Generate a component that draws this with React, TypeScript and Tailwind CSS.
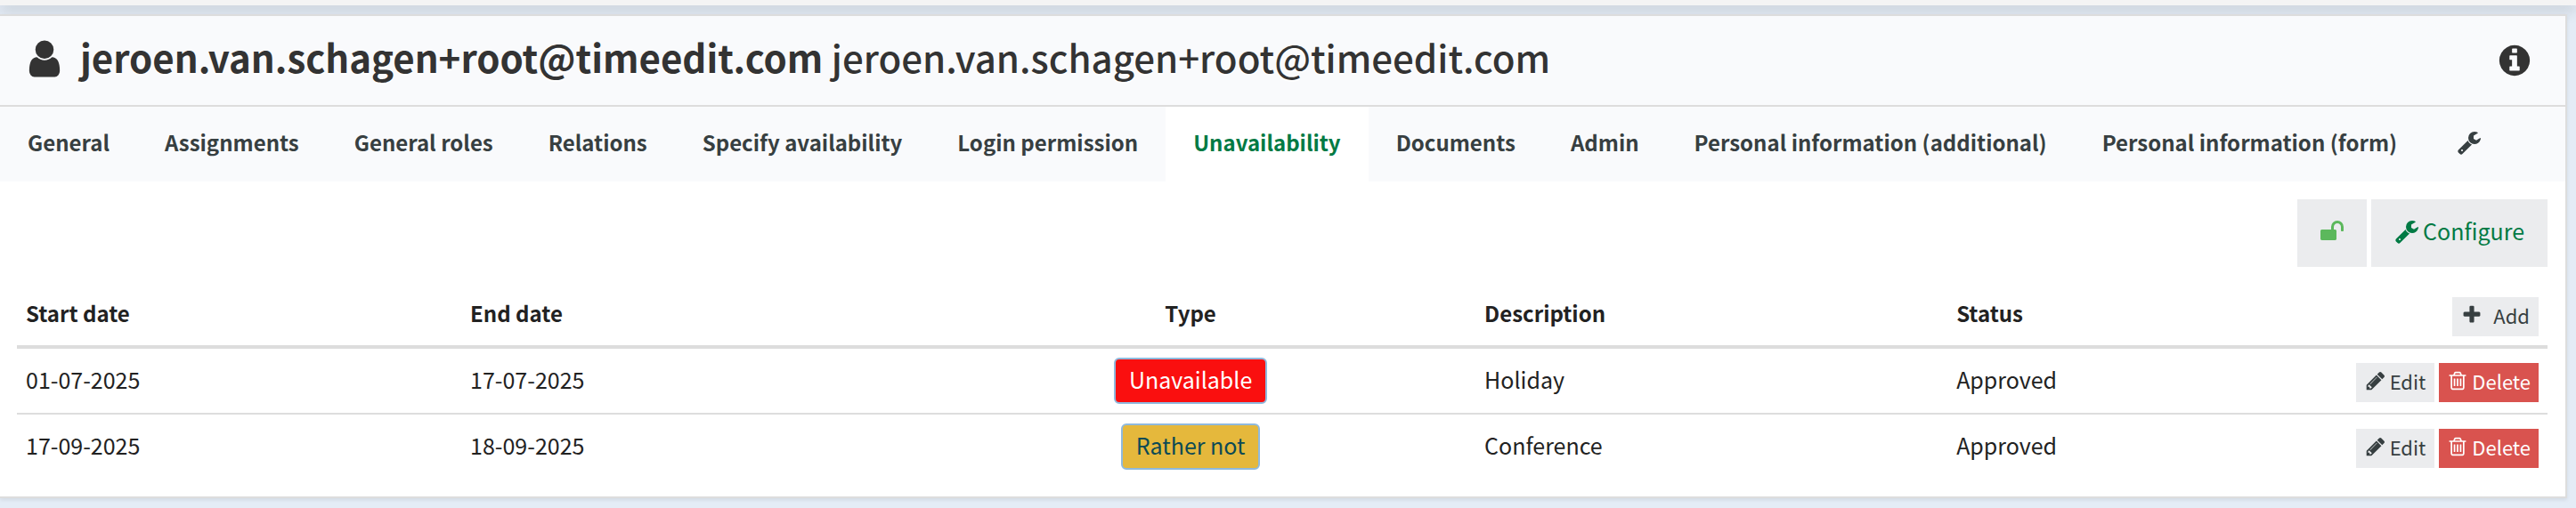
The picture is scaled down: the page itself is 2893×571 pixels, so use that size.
import type { ReactNode } from "react";

// Font Awesome 4 glyphs, all on the same 1792 grid
const icons = {
  user: "M1536 1399q0 109-62.5 187t-150.5 78h-854q-88 0-150.5-78t-62.5-187q0-85 8.5-160.5t31.5-152 58.5-131 94-89 134.5-34.5q131 128 313 128t313-128q76 0 134.5 34.5t94 89 58.5 131 31.5 152 8.5 160.5zM1280 512q0 159-112.5 271.5t-271.5 112.5-271.5-112.5-112.5-271.5 112.5-271.5 271.5-112.5 271.5 112.5 112.5 271.5z",
  info: "M1152 1376v-160q0-14-9-23t-23-9h-96v-512q0-14-9-23t-23-9h-320q-14 0-23 9t-9 23v160q0 14 9 23t23 9h96v320h-96q-14 0-23 9t-9 23v160q0 14 9 23t23 9h448q14 0 23-9t9-23zm-128-896v-160q0-14-9-23t-23-9h-192q-14 0-23 9t-9 23v160q0 14 9 23t23 9h192q14 0 23-9t9-23zm640 416q0 209-103 385.5t-279.5 279.5-385.5 103-385.5-103-279.5-279.5-103-385.5 103-385.5 279.5-279.5 385.5-103 385.5 103 279.5 279.5 103 385.5z",
  wrench: "M448 1472q0-26-19-45t-45-19-45 19-19 45 19 45 45 19 45-19 19-45zm644-420l-682 682q-37 37-90 37-52 0-91-37l-106-108q-38-36-38-90 0-53 38-91l681-681q39 98 114.5 173.5t173.5 114.5zm634-435q0 39-23 106-47 134-164.5 217.5t-258.5 83.5q-185 0-316.5-131.5t-131.5-316.5 131.5-316.5 316.5-131.5q58 0 121.5 16.5t107.5 46.5q16 11 16 28t-16 28l-293 169v224l193 107q5-3 79-48.5t135.5-81 70.5-35.5q15 0 23.5 10t8.5 25z",
  unlock: "M1728 576v256q0 26-19 45t-45 19h-64q-26 0-45-19t-19-45v-256q0-106-75-181t-181-75-181 75-75 181v192h96q40 0 68 28t28 68v576q0 40-28 68t-68 28h-960q-40 0-68-28t-28-68v-576q0-40 28-68t68-28h672v-192q0-185 131.5-316.5t316.5-131.5 316.5 131.5 131.5 316.5z",
  plus: "M1600 736v192q0 40-28 68t-68 28h-416v416q0 40-28 68t-68 28h-192q-40 0-68-28t-28-68v-416h-416q-40 0-68-28t-28-68v-192q0-40 28-68t68-28h416v-416q0-40 28-68t68-28h192q40 0 68 28t28 68v416h416q40 0 68 28t28 68z",
  pencil: "M491 1536l91-91-235-235-91 91v107h128v128h107zm523-928q0-22-22-22-10 0-17 7l-542 542q-7 7-7 17 0 22 22 22 10 0 17-7l542-542q7-7 7-17zm-54-192l416 416-832 832h-416v-416zm683 96q0 53-37 90l-166 166-416-416 166-165q36-38 90-38 53 0 91 38l235 234q37 39 37 91z",
  trash: "M704 736v576q0 14-9 23t-23 9h-64q-14 0-23-9t-9-23v-576q0-14 9-23t23-9h64q14 0 23 9t9 23zm256 0v576q0 14-9 23t-23 9h-64q-14 0-23-9t-9-23v-576q0-14 9-23t23-9h64q14 0 23 9t9 23zm256 0v576q0 14-9 23t-23 9h-64q-14 0-23-9t-9-23v-576q0-14 9-23t23-9h64q14 0 23 9t9 23zm128 724v-948h-896v948q0 22 7 40.5t14.5 27 10.5 8.5h832q3 0 10.5-8.5t14.5-27 7-40.5zm-672-1076h448l-48-117q-7-9-17-11h-317q-10 2-17 11zm928 32v64q0 14-9 23t-23 9h-96v948q0 83-47 143.5t-113 60.5h-832q-66 0-113-58.5t-47-141.5v-952h-96q-14 0-23-9t-9-23v-64q0-14 9-23t23-9h309l70-167q15-37 54-63t79-26h320q40 0 79 26t54 63l70 167h309q14 0 23 9t9 23z",
};

const tabs = [
  "General",
  "Assignments",
  "General roles",
  "Relations",
  "Specify availability",
  "Login permission",
  "Unavailability",
  "Documents",
  "Admin",
  "Personal information (additional)",
  "Personal information (form)",
];

const rows = [
  { start: "01-07-2025", end: "17-07-2025", type: "Unavailable", badge: "bg-[#fa0f0f] text-white", description: "Holiday", status: "Approved" },
  { start: "17-09-2025", end: "18-09-2025", type: "Rather not", badge: "bg-[#e5b83c] text-[#0b4a55]", description: "Conference", status: "Approved" },
];

function Icon({ name, className }: { name: keyof typeof icons; className: string }) {
  return (
    <svg viewBox="0 0 1792 1792" fill="currentColor" aria-hidden="true" className={`shrink-0 ${className}`}>
      <path d={icons[name]} />
    </svg>
  );
}

function SmallButton({ className, children }: { className: string; children: ReactNode }) {
  return (
    <button type="button" className={`inline-flex h-11 items-center text-[22px] leading-10 pb-1 ${className}`}>
      {children}
    </button>
  );
}

export default function App() {
  return (
    <div className="min-h-screen bg-[#e4ecf6] font-['Noto_Sans_CJK_SC',sans-serif] text-[25px] text-[#222]">
      <div className="relative h-1.5 bg-[#f4f4f4] shadow-[0_4px_16px_rgba(0,0,0,0.25)]" />

      <main className="relative mt-2.5 mr-2.5 border-2 border-l-0 border-[#ddd] bg-white shadow-[0_2px_4px_rgba(0,0,0,0.08)]">
        {/* Title */}
        <header className="flex h-[102px] items-center border-b-2 border-[#ddd] bg-[#f9fafc] pr-[37px] pb-1 pl-[26px] text-[#333]">
          <Icon name="user" className="size-12" />
          <h1 className="ml-4 grow pb-1 text-[42px] leading-[60px] font-medium whitespace-nowrap [text-shadow:0_2px_0_#fff]">
            <strong className="font-bold">jeroen.van.schagen+root@timeedit.com</strong>{" "}
            jeroen.van.schagen+root@timeedit.com
          </h1>
          <button type="button" aria-label="Information" className="pt-1">
            <Icon name="info" className="size-10" />
          </button>
        </header>

        {/* Tabs */}
        <nav className="flex h-[84px] bg-[#f9fafc] text-[24px] font-bold text-[#373f41]">
          {tabs.map((tab) => (
            <a
              key={tab}
              href="#"
              className={`px-[31px] pb-1 leading-[80px] whitespace-nowrap ${tab === "Unavailability" ? "bg-white text-[#007a44]" : ""}`}
            >
              {tab}
            </a>
          ))}
          <a href="#" aria-label="Configure tabs" className="flex items-center px-[36px] pb-1">
            <Icon name="wrench" className="size-7" />
          </a>
        </nav>

        <section className="p-5 pl-[19px]">
          <div className="mb-6 flex justify-end gap-[5px] text-[#007a44]">
            <button type="button" aria-label="Unlock" className="flex h-[76px] items-center bg-[#ebecee] px-[25px] pb-1 text-[#5cb85c]">
              <Icon name="unlock" className="size-7" />
            </button>
            <button type="button" className="flex h-[76px] items-center gap-1 bg-[#ebecee] px-[26px] pb-1">
              <Icon name="wrench" className="size-7" />
              Configure
            </button>
          </div>

          <table className="w-full table-fixed border-collapse">
            <thead>
              <tr className="border-b-4 border-[#ddd] text-left align-top text-[24px] leading-9">
                <th className="w-[17.56%] px-2.5 py-2.5">Start date</th>
                <th className="w-[17.56%] px-2.5 py-2.5">End date</th>
                <th className="w-[22.52%] px-2.5 py-2.5 text-center">Type</th>
                <th className="w-[18.65%] px-2.5 py-2.5">Description</th>
                <th className="px-2.5 py-2.5">Status</th>
                <th className="px-2.5 py-2.5 font-normal">
                  <div className="flex justify-end">
                    <SmallButton className="gap-3 bg-[#ebecee] px-[10px] text-[#373f41]">
                      <Icon name="plus" className="size-6" />
                      Add
                    </SmallButton>
                  </div>
                </th>
              </tr>
            </thead>
            <tbody className="divide-y-2 divide-[#ddd]">
              {rows.map((row) => (
                <tr key={row.start} className="align-top leading-[48px]">
                  <td className="px-2.5 pt-2.5">{row.start}</td>
                  <td className="px-2.5 pt-2.5">{row.end}</td>
                  <td className="px-2.5 py-2.5 text-center">
                    <div className="flex justify-center">
                      <span className={`rounded-md border-2 border-[#8fb9dd] px-[15px] pb-1 leading-[44px] ${row.badge}`}>{row.type}</span>
                    </div>
                  </td>
                  <td className="px-2.5 pt-2.5">{row.description}</td>
                  <td className="px-2.5 pt-2.5">{row.status}</td>
                  <td className="px-2.5 pt-4">
                    <div className="flex justify-end gap-[5px]">
                      <SmallButton className="gap-1 bg-[#ebecee] px-[10px] text-[#373f41]">
                        <Icon name="pencil" className="size-6" />
                        Edit
                      </SmallButton>
                      <SmallButton className="gap-1 bg-[#d9534f] px-[9px] text-white">
                        <Icon name="trash" className="size-6" />
                        Delete
                      </SmallButton>
                    </div>
                  </td>
                </tr>
              ))}
            </tbody>
          </table>
        </section>
      </main>
    </div>
  );
}
